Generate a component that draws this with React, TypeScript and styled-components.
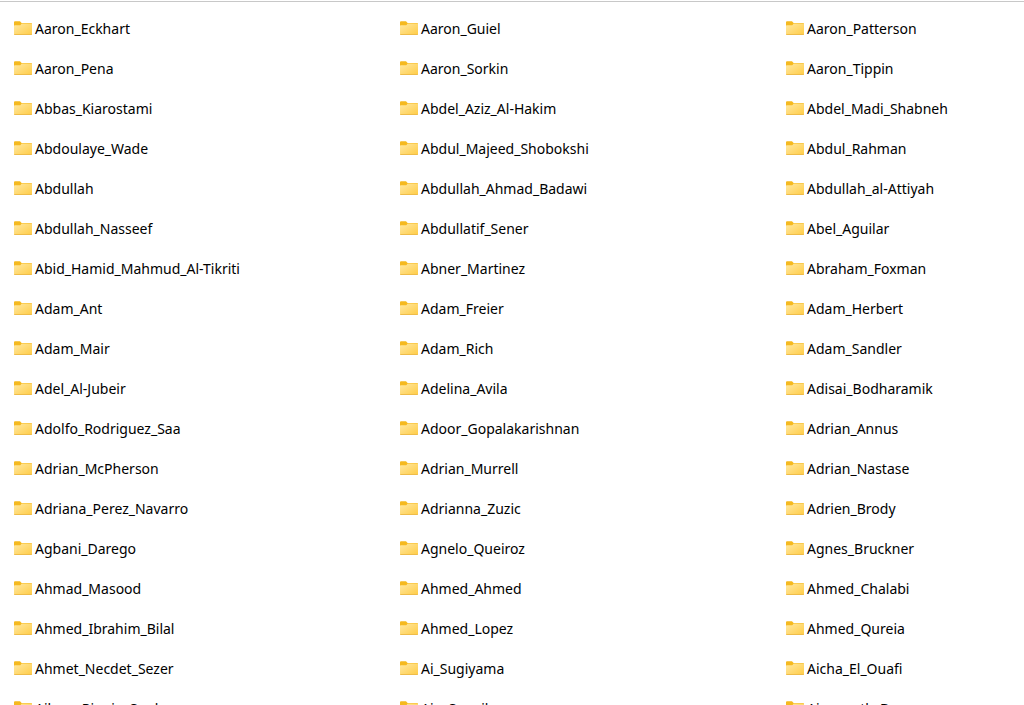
import React from "react";
import styled, { createGlobalStyle } from "styled-components";

const GlobalStyle = createGlobalStyle`
  * { box-sizing: border-box; }
  body { margin: 0; background: #fff; }
`;

const Pane = styled.main`
  height: 100vh;
  overflow: hidden;
  border-top: 1px solid #fff;
  background: #fff;
  color: #000;
  font-family: "Segoe UI", "Noto Sans", "Open Sans", sans-serif;
  font-size: 14px;
  line-height: 20px;
`;

const FolderGrid = styled.ul`
  display: grid;
  grid-template-columns: 386fr 386fr 238fr;
  grid-auto-rows: 40px;
  margin: 0;
  padding: 7px 0 0 14px;
  border-top: 1px solid #c8c8c8;
  list-style: none;
`;

const Folder = styled.li`
  display: flex;
  align-items: center;
  gap: 3px;
  white-space: nowrap;
`;

const Icon = styled.svg`
  flex: none;
  width: 18px;
  height: 16px;
`;

const names = [
  "Aaron_Eckhart", "Aaron_Guiel", "Aaron_Patterson",
  "Aaron_Pena", "Aaron_Sorkin", "Aaron_Tippin",
  "Abbas_Kiarostami", "Abdel_Aziz_Al-Hakim", "Abdel_Madi_Shabneh",
  "Abdoulaye_Wade", "Abdul_Majeed_Shobokshi", "Abdul_Rahman",
  "Abdullah", "Abdullah_Ahmad_Badawi", "Abdullah_al-Attiyah",
  "Abdullah_Nasseef", "Abdullatif_Sener", "Abel_Aguilar",
  "Abid_Hamid_Mahmud_Al-Tikriti", "Abner_Martinez", "Abraham_Foxman",
  "Adam_Ant", "Adam_Freier", "Adam_Herbert",
  "Adam_Mair", "Adam_Rich", "Adam_Sandler",
  "Adel_Al-Jubeir", "Adelina_Avila", "Adisai_Bodharamik",
  "Adolfo_Rodriguez_Saa", "Adoor_Gopalakarishnan", "Adrian_Annus",
  "Adrian_McPherson", "Adrian_Murrell", "Adrian_Nastase",
  "Adriana_Perez_Navarro", "Adrianna_Zuzic", "Adrien_Brody",
  "Agbani_Darego", "Agnelo_Queiroz", "Agnes_Bruckner",
  "Ahmad_Masood", "Ahmed_Ahmed", "Ahmed_Chalabi",
  "Ahmed_Ibrahim_Bilal", "Ahmed_Lopez", "Ahmed_Qureia",
  "Ahmet_Necdet_Sezer", "Ai_Sugiyama", "Aicha_El_Ouafi",
  "Aileen_Riggin_Soule", "Ain_Seppik", "Ainsworth_Dyer",
];

function FolderIcon() {
  return (
    <Icon viewBox="0 0 18 16" aria-hidden="true">
      <path d="M0 1.2Q0 .2 1 .2H6L7.6 2H17Q18 2 18 3V6H0Z" fill="#f5b91f" />
      <path d="M0 5Q0 4.2 .8 4.2H5.6Q6.3 4.2 6.8 3.7L7.6 2.6H17.4Q18 2.6 18 3.4V13.2Q18 14 17.2 14H.8Q0 14 0 13.2Z" fill="url(#folder-front)" />
      <path d="M.3 13.5H17.7" stroke="#eebc4a" strokeWidth="1" />
    </Icon>
  );
}

export default function App() {
  return (
    <Pane>
      <GlobalStyle />
      <svg width="0" height="0" style={{ display: "block" }} aria-hidden="true">
        <defs>
          <linearGradient id="folder-front" x1="0" y1="0" x2="1" y2="1">
            <stop offset="0" stopColor="#ffe8a3" />
            <stop offset="1" stopColor="#ffcc45" />
          </linearGradient>
        </defs>
      </svg>
      <FolderGrid>
        {names.map((name) => (
          <Folder key={name}>
            <FolderIcon />
            <span>{name}</span>
          </Folder>
        ))}
      </FolderGrid>
    </Pane>
  );
}
